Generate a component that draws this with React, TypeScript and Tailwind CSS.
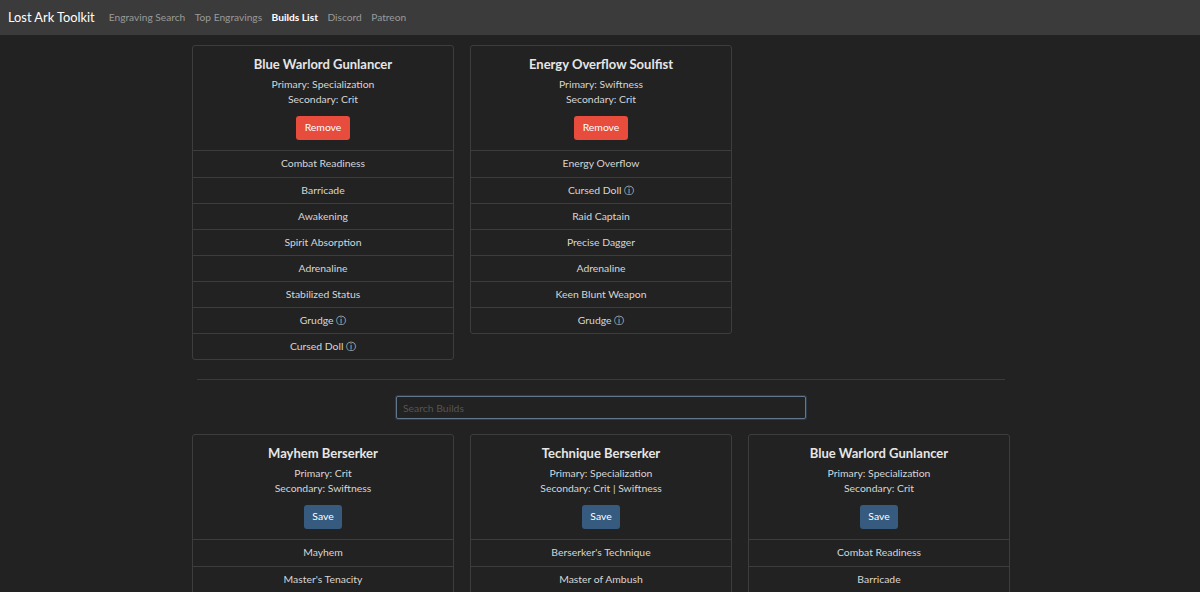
import React from "react"

type Build = {
    name: string
    primary: string
    secondary: string
    engravings: string[]
}

const saved: Build[] = [
    {
        name: "Blue Warlord Gunlancer",
        primary: "Specialization",
        secondary: "Crit",
        engravings: ["Combat Readiness", "Barricade", "Awakening", "Spirit Absorption", "Adrenaline", "Stabilized Status", "Grudge ⓘ", "Cursed Doll ⓘ"],
    },
    {
        name: "Energy Overflow Soulfist",
        primary: "Swiftness",
        secondary: "Crit",
        engravings: ["Energy Overflow", "Cursed Doll ⓘ", "Raid Captain", "Precise Dagger", "Adrenaline", "Keen Blunt Weapon", "Grudge ⓘ"],
    },
]

const builds: Build[] = [
    {
        name: "Mayhem Berserker",
        primary: "Crit",
        secondary: "Swiftness",
        engravings: ["Mayhem", "Master's Tenacity"],
    },
    {
        name: "Technique Berserker",
        primary: "Specialization",
        secondary: "Crit | Swiftness",
        engravings: ["Berserker's Technique", "Master of Ambush"],
    },
    {
        name: "Blue Warlord Gunlancer",
        primary: "Specialization",
        secondary: "Crit",
        engravings: ["Combat Readiness", "Barricade"],
    },
]

function BuildCard({ build, saved }: { build: Build; saved?: boolean }) {
    return (
        <div className={"border border-[#3d3d3d] rounded-[3px] bg-[#222] self-start " + (saved ? "" : "pb-[40px]")}>
            <div className="flex flex-col items-center pt-[9px] pb-[10px] border-b border-[#3d3d3d]">
                <h5 className="text-[13px] font-bold text-[#e6e6e6] leading-[18px]">{build.name}</h5>
                <p className="mt-[4px] text-[10.4px] leading-[15px] text-[#d6d6d6]">Primary: {build.primary}</p>
                <p className="text-[10.4px] leading-[15px] text-[#d6d6d6]">Secondary: {build.secondary}</p>
                {saved ? (
                    <button className="mt-[9px] h-[24px] w-[54px] rounded-[3px] bg-[#e74c3c] text-white text-[10.4px]">Remove</button>
                ) : (
                    <button className="mt-[9px] h-[24px] w-[38px] rounded-[3px] bg-[#375a7f] text-white text-[10.4px]">Save</button>
                )}
            </div>
            <ul>
                {build.engravings.map((e, i) => (
                    <li
                        key={i}
                        className={"h-[26px] flex items-center justify-center text-[10.4px] text-[#d6d6d6] " + (i > 0 ? "border-t border-[#3d3d3d]" : "")}
                    >
                        {e}
                    </li>
                ))}
            </ul>
        </div>
    )
}

export default function App() {
    return (
        <div className="bg-[#222] font-['Lato',sans-serif] overflow-hidden h-[592px]">
            <nav className="h-[35px] bg-[#3b3b3b] flex items-center px-[8px]">
                <span className="text-[12.8px] text-white mr-[14px]">Lost Ark Toolkit</span>
                <ul className="flex items-center gap-[9.5px] text-[10.2px]">
                    <li><a className="text-[#9a9a9a]">Engraving Search</a></li>
                    <li><a className="text-[#9a9a9a]">Top Engravings</a></li>
                    <li><a className="text-white font-bold">Builds List</a></li>
                    <li><a className="text-[#9a9a9a]">Discord</a></li>
                    <li><a className="text-[#9a9a9a]">Patreon</a></li>
                </ul>
            </nav>

            <div className="w-[818px] ml-[192px] pt-[10px]">
                <div className="grid grid-cols-3 gap-[16px]">
                    {saved.map((b, i) => (
                        <BuildCard key={i} build={b} saved />
                    ))}
                </div>

                <hr className="mx-[5px] mt-[19px] border-t border-[#3a3a3a]" />

                <div className="flex justify-center mt-[16px]">
                    <input
                        placeholder="Search Builds"
                        className="w-[410px] h-[23px] px-[6px] bg-[#222] border border-[#62778e] rounded-[2px] shadow-[0_0_0_1px_rgba(55,90,127,0.45)] text-[10.4px] text-[#ddd] placeholder:text-[#555] outline-none"
                    />
                </div>

                <div className="grid grid-cols-3 gap-[16px] mt-[15px]">
                    {builds.map((b, i) => (
                        <BuildCard key={i} build={b} />
                    ))}
                </div>
            </div>
        </div>
    )
}
